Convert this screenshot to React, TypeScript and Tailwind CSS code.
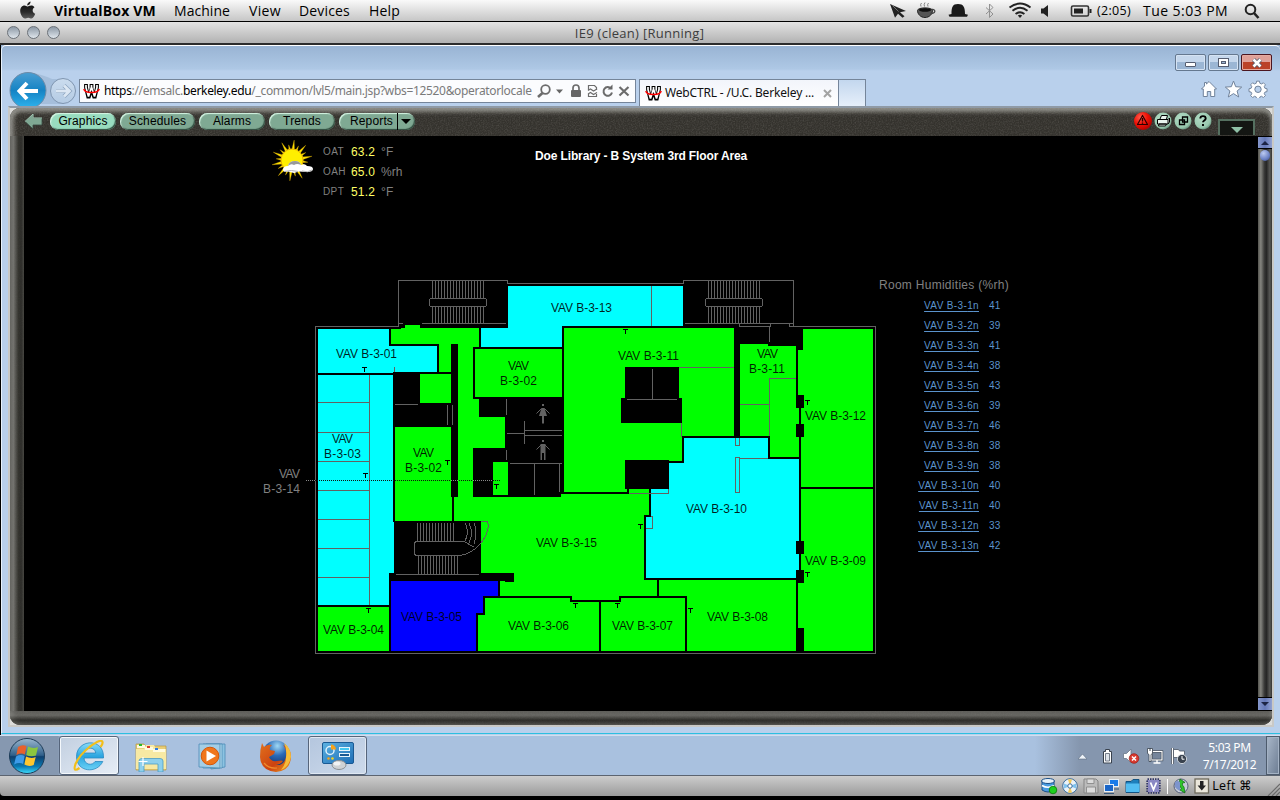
import React from "react";

const GREEN = "#00ff00";
const CYAN = "#00ffff";
const LINE = "#626262";

/* ---------- macOS menu bar ---------- */

function AppleLogo() {
  return (
    <svg width="17" height="19" viewBox="0 0 17 19">
      <defs>
        <linearGradient id="apple" x1="0" y1="0" x2="0" y2="1">
          <stop offset="0" stopColor="#151515" />
          <stop offset=".5" stopColor="#2a2a2a" />
          <stop offset="1" stopColor="#5a5a5a" />
        </linearGradient>
      </defs>
      <path d="M11.6 0.6c.2 1.8-1.4 3.9-3.4 3.9C8 2.700 9.600.9 11.600.6Z" fill="#222" />
      <path
        d="M8.300 5.600c.9 0 2-1.100 3.900-1.100 1.400 0 2.600.7 3.300 1.700-2.700 1.700-2.300 5.500.7 6.600-.6 1.700-2.100 4.600-3.700 4.700-1.300 0-1.700-.8-3.300-.8s-2.100.8-3.300.8C3.800 17.400 1.200 13.400 1.200 10c0-3.200 2-5.400 4.300-5.400 1.300 0 2.100 1 2.800 1Z"
        fill="url(#apple)"
      />
    </svg>
  );
}

function StatusIcons() {
  return (
    <svg width="206" height="21" viewBox="888 0 206 21" fill="#222">
      <path d="M890 4l16 7-6 1.200 4.500 4-2 1.600-4.500-4-3 4z" />
      <path d="M892.500 5.500l6 6" stroke="#bbb" strokeWidth=".5" />
      <path d="M917.500 10.500c0-3.500 15-3.500 15 0 0 3.500-3 7-7.500 7s-7.500-3.500-7.500-7z" fill="#555" stroke="#222" />
      <ellipse cx="925" cy="10" rx="6" ry="1.700" fill="#111" />
      <path d="M932 9.500c4-.5 4 4-1.500 4" fill="none" stroke="#444" strokeWidth="1.300" />
      <path d="M921 6.500q-1-2 .5-3.500m3 3.500q-1-2 .5-4m3 4q-1-2 .5-3.500" fill="none" stroke="#777" strokeWidth=".9" />
      <path d="M951.500 14c0-7 1-10 6.500-10s7 3 7 10l3 .8-1 1.900h-17.500l-1-1.900z" fill="#1a1a1a" />
      <path d="M986 7.500l7 6.500-3.500 3.500V4l3.500 3.500-7 6.500" fill="none" stroke="#909090" strokeWidth="1" />
      <g fill="none" stroke="#222" strokeWidth="1.900">
        <path d="M1009.500 7.500q10.500-8 21 0" />
        <path d="M1012.500 10.800q7.500-6 15 0" />
        <path d="M1015.600 14q4.400-3.600 8.800 0" />
      </g>
      <path d="M1017.800 15.500q2.200-1.500 4.400 0l-2.200 2.500z" />
      <path d="M1041 8.500h2.500l4.500-3.500v12l-4.500-3.500H1041z" />
      <rect x="1071.500" y="6" width="17" height="10" rx="1.500" fill="none" stroke="#333" strokeWidth="1.600" />
      <rect x="1074" y="8.500" width="9" height="5" fill="#222" />
      <path d="M1089.500 9h2v4h-2z" />
    </svg>
  );
}

function MenuBar() {
  return (
    <header className="flex h-[22px] items-center border-b border-black bg-linear-to-b from-[#fafafa] to-[#c6c6c6] pl-[19px] font-['Open_Sans',sans-serif] text-[14px] leading-[20px] text-black">
      <AppleLogo />
      <span className="ml-[18px] w-[120px] text-[14px] font-bold tracking-[0.15px]">VirtualBox VM</span>
      <span className="w-[75px] tracking-[0.05px]">Machine</span>
      <span className="w-[50px] tracking-[0.3px]">View</span>
      <span className="w-[70px] tracking-[0.15px]">Devices</span>
      <span className="w-[40px] tracking-[0.2px]">Help</span>
      <div className="ml-auto flex items-center pr-[19px]">
        <StatusIcons />
        <span className="ml-[3px] w-[46px] text-[12.500px] tracking-[0.3px]">(2:05)</span>
        <span className="w-[101px] whitespace-nowrap text-[14px] tracking-[0.45px]">Tue 5:03 PM</span>
        <svg width="17" height="18" viewBox="0 0 17 18" fill="none" stroke="#222">
          <circle cx="6.500" cy="7.500" r="4.800" strokeWidth="2" />
          <path d="M10 11l4.500 5" strokeWidth="2.600" />
        </svg>
      </div>
    </header>
  );
}

function TitleBar() {
  return (
    <div className="flex h-[23px] items-center border-b-2 border-[#2c2c2c] bg-linear-to-b from-[#e4e4e4] to-[#b2b2b2] pl-[7px]">
      <div className="flex w-[120px] gap-[7px]">
        {[0, 1, 2].map((i) => (
          <span key={i} className="h-[13px] w-[13px] rounded-full border border-[#6b7178] bg-linear-to-b from-[#8d99a6] to-[#dfe6ec]" />
        ))}
      </div>
      <span className="flex-1 pr-[128px] text-center font-['Open_Sans',sans-serif] text-[13px] leading-[20px] tracking-[0.28px] text-[#3d3d3d]">
        IE9 (clean) [Running]
      </span>
    </div>
  );
}

/* ---------- Browser chrome ---------- */

function WebCtrlIcon() {
  return (
    <svg width="17" height="16" viewBox="0 0 17 16" fill="none">
      <path d="M3 1v3.500L5.500 15L8.500 5.500L11.500 15L14 4.500V1M8.500 1v6" stroke="#000" strokeWidth="3.800" strokeLinejoin="bevel" />
      <path d="M3 2v2.500L5.500 13.500L8.500 4L11.500 13.500L14 4.500V2M8.500 2v4" stroke="#fff" strokeWidth="1.700" strokeLinejoin="bevel" />
      <path d="M.8 6Q1.500 9.500 8.500 9.500T16.200 6" stroke="#f00" strokeWidth="1.400" />
    </svg>
  );
}

function WindowButtons() {
  return (
    <div className="flex h-[33px] justify-end gap-[2px] pr-[8px] pt-[8px]">
      <span className="flex h-[17px] w-[31px] items-end justify-center rounded-[2px] border border-[#65788f] bg-linear-to-b from-[#c5d7ec] from-50% to-[#9bb6d4] to-50% pb-[3px] shadow-[inset_0_0_0_1px_#d5e3f3]">
        <i className="h-[5px] w-[11px] rounded-[1px] border border-[#555d70] bg-white" />
      </span>
      <span className="flex h-[17px] w-[31px] items-center justify-center rounded-[2px] border border-[#65788f] bg-linear-to-b from-[#c5d7ec] from-50% to-[#9bb6d4] to-50% shadow-[inset_0_0_0_1px_#d5e3f3]">
        <svg width="11" height="9" viewBox="0 0 11 9">
          <rect x=".5" y=".5" width="10" height="8" fill="#fff" stroke="#555d70" />
          <rect x="3.500" y="3.500" width="4" height="2" fill="#9bb6d4" stroke="#555d70" />
        </svg>
      </span>
      <span className="flex h-[17px] w-[31px] items-center justify-center rounded-[2px] border border-[#4b1620] bg-linear-to-b from-[#dfa098] from-50% to-[#bb4229] to-50% shadow-[inset_0_0_0_1px_#e5aaa0]">
        <svg width="12" height="10" viewBox="0 0 12 10">
          <path d="M2.500 1.500l7 7M9.500 1.500l-7 7" stroke="#555d70" strokeWidth="4.200" />
          <path d="M2.500 1.500l7 7M9.500 1.500l-7 7" stroke="#fff" strokeWidth="2.600" />
        </svg>
      </span>
    </div>
  );
}

function NavButtons() {
  return (
    <svg width="71" height="35" viewBox="7 70 71 35" className="shrink-0 self-start">
      <defs>
        <linearGradient id="back" x1="0" y1="0" x2="0" y2="1">
          <stop offset="0" stopColor="#4a9ed2" />
          <stop offset=".5" stopColor="#1583c4" />
          <stop offset="1" stopColor="#2fb4ee" />
        </linearGradient>
        <linearGradient id="fwd" x1="0" y1="0" x2="0" y2="1">
          <stop offset="0" stopColor="#cbdcee" />
          <stop offset="1" stopColor="#b4cbe4" />
        </linearGradient>
      </defs>
      <path d="M34 72q12 3 18 6q8 0 12 0V103H40z" fill="#9cb6d4" opacity=".7" />
      <circle cx="28" cy="89.500" r="18" fill="url(#back)" stroke="#6d8ba8" />
      <path d="M27 82l-7.500 8 7.500 8M20 90H38" fill="none" stroke="#fff" strokeWidth="4" />
      <circle cx="63" cy="90" r="12.500" fill="url(#fwd)" stroke="#7f95b0" />
      <path d="M64 84.500l5.500 5.500-5.500 5.500M56 90h13" fill="none" stroke="#8ba3bf" strokeWidth="4.200" />
      <path d="M64 84.500l5.500 5.500-5.500 5.500M56 90h13" fill="none" stroke="#dce7f3" strokeWidth="2.800" />
    </svg>
  );
}

function AddressIcons() {
  return (
    <svg width="94" height="16" viewBox="537 82 94 16" fill="none" stroke="#6c6c6c">
      <circle cx="545.500" cy="88.500" r="4.300" strokeWidth="1.800" />
      <path d="M542.500 92l-4.500 4" strokeWidth="2.600" />
      <path d="M556 88.500h7l-3.500 4z" fill="#666" stroke="none" />
      <rect x="571" y="89" width="10" height="7" rx="1" fill="#666" stroke="none" />
      <path d="M573 89v-2a3 3 0 0 1 6 0v2" strokeWidth="1.700" />
      <path d="M588.500 89V84.500h6l2 2V89M588.500 93v2.500h8V93" strokeWidth="1.200" />
      <path d="M588 89.500l2.500-1.500 3 2 3.500-2M588 93l2.500-1.500 3 2 3.500-2" strokeWidth="1.200" />
      <path d="M611 87.500a4.300 4.300 0 1 0 1 4" strokeWidth="2" />
      <path d="M607.500 88.500h5v-5z" fill="#666" stroke="none" />
      <path d="M619.500 86l9 8.500M628.500 86l-9 8.500" strokeWidth="2.200" />
    </svg>
  );
}

function ToolIcons() {
  return (
    <svg width="67" height="18" viewBox="1201 80 67 18" fill="#fff" stroke="#71839b" strokeWidth="1">
      <path d="M1209 81.500l7.500 7.500h-1.800v7.500h-4v-5h-3.400v5h-4V89h-1.800l3-3v-3.500h2v1.500z" />
      <path d="M1233.500 81l2.200 5.700 6 .4-4.600 3.900 1.600 6-5.200-3.400-5.200 3.400 1.600-6-4.600-3.900 6-.4z" />
      <g>
        <path d="M1256.500 81.500h3l.4 2.200 1.800.7 1.900-1.200 2.100 2.100-1.200 1.900.7 1.700 2.200.5v3l-2.200.5-.7 1.700 1.200 1.900-2.100 2.100-1.900-1.300-1.800.7-.4 2h-3l-.4-2-1.800-.7-1.900 1.300-2.100-2.100 1.200-1.900-.7-1.700-2.200-.5v-3l2.200-.5.7-1.700-1.200-1.900 2.100-2.100 1.900 1.200 1.800-.7z" transform="translate(51.600 3) scale(.959)" />
        <circle cx="1258" cy="89.300" r="3.200" fill="#b9d0ec" />
      </g>
    </svg>
  );
}

function NavRow() {
  return (
    <div className="flex h-[27px] items-start pl-[5px]">
      <div className="-mt-[8px] flex">
        <NavButtons />
      </div>
      <div className="ml-px flex h-[24px] w-[557px] shrink-0 items-center border border-[#75859a] bg-[#fbfcfe] pl-[3px]">
        <WebCtrlIcon />
        <span className="ml-[4px] w-[429px] whitespace-nowrap font-['Noto_Sans',sans-serif] text-[12px] leading-[20px] tracking-[-0.33px] text-[#7a7a7a]">
          <span className="text-black">https</span>://emsalc.<span className="text-black">berkeley.edu</span>
          /_common/lvl5/main.jsp?wbs=12520&amp;operatorlocale
        </span>
        <span className="ml-[4px]">
          <AddressIcons />
        </span>
      </div>
      <div className="ml-[3px] flex h-[27px] w-[200px] shrink-0 items-center border border-b-0 border-[#75859a] bg-linear-to-b from-[#f2f5fb] to-white pl-[5px]">
        <WebCtrlIcon />
        <span className="ml-[3px] w-[158px] whitespace-nowrap font-['Noto_Sans',sans-serif] text-[12px] leading-[20px] tracking-[-0.17px] text-[#111]">
          WebCTRL - /U.C. Berkeley ...
        </span>
        <svg width="9" height="9" viewBox="0 0 9 9">
          <path d="M1 1l7 7M8 1L1 8" stroke="#a3a3a3" strokeWidth="2" />
        </svg>
      </div>
      <div className="h-[27px] w-[27px] border border-b-0 border-l-0 border-[#75859a] bg-linear-to-b from-[#c3d7ee] to-[#e6effa]" />
      <div className="ml-auto pr-[12px] pt-px">
        <ToolIcons />
      </div>
    </div>
  );
}

/* ---------- WebCTRL frame ---------- */

const TABS = [
  { label: "Graphics", box: "w-[66px]", on: true },
  { label: "Schedules", box: "w-[75px]", on: false },
  { label: "Alarms", box: "w-[66px]", on: false },
  { label: "Trends", box: "w-[66px]", on: false },
];

const PILL =
  "flex h-[17px] items-center justify-center rounded-full font-['Liberation_Sans',sans-serif] text-[12px] leading-[17px] tracking-[0.15px] text-black shadow-[inset_1px_1px_1px_#d6f5e4,inset_-1px_-1px_1px_#2f4a3d]";

function RoundIcons() {
  return (
    <svg width="80" height="20" viewBox="1133 111 80 20">
      <defs>
        <radialGradient id="gball" cx=".4" cy=".35" r=".75">
          <stop offset="0" stopColor="#b4dcc6" />
          <stop offset=".7" stopColor="#98c8ae" />
          <stop offset="1" stopColor="#4f7a66" />
        </radialGradient>
        <radialGradient id="rball" cx=".35" cy=".3" r=".8">
          <stop offset="0" stopColor="#ff5a4c" />
          <stop offset=".5" stopColor="#ee1106" />
          <stop offset="1" stopColor="#a80000" />
        </radialGradient>
      </defs>
      <circle cx="1143" cy="121" r="9" fill="url(#rball)" />
      <path d="M1142.500 115.500l5 9h-10z" fill="none" stroke="#2a0000" strokeWidth="1.200" strokeLinejoin="round" />
      <path d="M1142.500 118v3.500M1142.500 122.500v1.200" stroke="#2a0000" strokeWidth="1.400" />
      <circle cx="1163" cy="121" r="8.500" fill="url(#gball)" />
      <path d="M1160 119l1.500-3.500h6l-1 3.500M1157.500 119.500h10.500v4.500h-10.500zM1159 124h7.500l-1 2h-7zM1168 119.500l1.500-1.500v4l-1.500 2" fill="#e8f4ee" stroke="#000" />
      <circle cx="1183" cy="121" r="8.500" fill="url(#gball)" />
      <path d="M1182.500 117h5v5h-5zM1179.500 120h5v4.500h-5z" fill="#9ccdb3" stroke="#000" strokeWidth="1.300" />
      <circle cx="1203" cy="121" r="8.500" fill="url(#gball)" />
      <path d="M1200.300 118.500c0-3.200 5.400-3.200 5.400 0 0 2-2.700 1.900-2.700 3.700M1203 124v2" fill="none" stroke="#000" strokeWidth="1.900" />
    </svg>
  );
}

function FrameToolbar() {
  return (
    <div className="relative flex h-[28px] items-start pl-[14px] pt-[5px]">
      <svg width="19" height="17" viewBox="0 0 19 17" className="mr-[7px]">
        <path d="M1 8.500L9 1v4h9v7H9v4z" fill="#7fa893" stroke="#39473f" strokeWidth=".8" />
        <path d="M1 8.500L9 1v4h9" fill="none" stroke="#a4c6b4" />
      </svg>
      <div className="flex gap-[4px]">
        {TABS.map((t) => (
          <span key={t.label} className={`${PILL} ${t.box} ${t.on ? "bg-[#98dcbf]" : "bg-[#7fa993]"}`}>
            {t.label}
          </span>
        ))}
        <span className={`${PILL} w-[76px] bg-[#7fa993]`}>
          <span className="flex-1 pl-[7px] text-center">Reports</span>
          <span className="flex h-full w-[18px] items-center border-l border-black pl-[3px]">
            <i className="h-0 w-0 border-x-[5px] border-t-[5px] border-x-transparent border-t-black" />
          </span>
        </span>
      </div>
      <div className="ml-auto -mt-[2px] flex">
        <RoundIcons />
        <span className="ml-[5px] mr-[17px] mt-[8px] flex h-[16px] w-[37px] items-end justify-center border-2 border-b-0 border-[#557060] bg-[#141613] pb-[2px]">
          <i className="h-0 w-0 border-x-[6px] border-t-[6px] border-x-transparent border-t-[#8fc0a6]" />
        </span>
      </div>
    </div>
  );
}

function Grain() {
  return (
    <svg className="absolute inset-0 opacity-20" width="100%" height="100%">
      <filter id="grain">
        <feTurbulence type="fractalNoise" baseFrequency=".75" numOctaves="2" seed="4" />
        <feColorMatrix values="0 0 0 0 .45  0 0 0 0 .43  0 0 0 0 .4  1.800 0 0 0 -.65" />
      </filter>
      <rect width="100%" height="100%" filter="url(#grain)" />
    </svg>
  );
}

function ScrollColumn() {
  return (
    <div className="flex w-[14px] flex-col items-center bg-[linear-gradient(90deg,#55554f,#85857f_20%,#3a3a38_45%,#262625_60%,#5a5a57_85%,#333)]">
      <span className="flex h-[13px] w-full items-center justify-center border-y border-black bg-linear-to-r from-[#8698cc] via-[#6679b8] to-[#93a3d2]">
        <i className="h-0 w-0 border-x-[4px] border-b-[4px] border-x-transparent border-b-[#1c2444]" />
      </span>
      <span className="mt-px h-[11px] w-[10px] rounded-full bg-[radial-gradient(circle_at_35%_30%,#bccaf0,#6a80c4_60%,#34427a)]" />
      <span className="mt-auto flex h-[14px] w-full items-center justify-center border-y border-black bg-linear-to-r from-[#8698cc] via-[#6679b8] to-[#93a3d2]">
        <i className="h-0 w-0 border-x-[4px] border-t-[4px] border-x-transparent border-t-[#1c2444]" />
      </span>
    </div>
  );
}

/* ---------- Page content ---------- */

function SunIcon() {
  const rays = Array.from({ length: 20 }, (_, i) => i * 18);
  return (
    <svg width="42" height="42" viewBox="0 0 42 42">
      {rays.map((a, i) => (
        <path key={a} d={i % 2 ? "M18.800 11L20 4.500l1.200 6.500z" : "M18.500 11L20 0l1.500 11z"} fill="#ffe200" stroke="#d8a800" strokeWidth=".3" transform={`rotate(${a + 6} 20 20.500)`} />
      ))}
      <circle cx="20" cy="20" r="11" fill="#ffef00" stroke="#e8b000" />
      <path d="M11 30q0-4 5-4 1-5 7-5 5 0 6 4 4-2 6 1 6 0 6 3 0 3-6 3l-8-.5-5 1.500-6-1.500q-5 1-5-1.500z" fill="#fff" />
      <path d="M16 26q1-5 7-5 5 0 6 4-4-2-7 0-3-2-6 1z" fill="#999" />
      <path d="M12 31.500q8-2 14 0M30 31q6 2 10-1" stroke="#b5b5b5" fill="none" />
    </svg>
  );
}

function Weather() {
  const rows = [
    ["OAT", "63.2", "°F"],
    ["OAH", "65.0", "%rh"],
    ["DPT", "51.2", "°F"],
  ];
  return (
    <div className="flex w-[139px]">
      <div className="pt-[4px]">
        <SunIcon />
      </div>
      <div className="ml-[9px] pt-[6px]">
        {rows.map(([k, v, u]) => (
          <div key={k} className="flex h-[20px] items-center text-[12px] leading-[20px] text-[#808080]">
            <span className="w-[28px] text-[10px] tracking-[0.4px]">{k}</span>
            <span className="w-[30px] text-[12px] tracking-[0.2px] text-[#ffff66]">{v}</span>
            <span className="tracking-[0.1px]">{u}</span>
          </div>
        ))}
      </div>
    </div>
  );
}

const ROOMS: { fill: string; points: string }[] = [
  { fill: CYAN, points: "318,329 389,329 389,346 437,346 437,372 393,372 393,373 318,373" },
  { fill: CYAN, points: "318,375 393,375 393,522 394,522 394,573 389,573 389,605 318,605" },
  { fill: CYAN, points: "508,286 683,286 683,326 562,326 562,347 481,347 481,328 508,328" },
  {
    fill: GREEN,
    points:
      "391,329 401,329 401,328 405,328 405,325 420,325 420,328 479,328 479,347 473,347 473,399 479,399 479,417 505,417 505,448 473,448 473,498 458,498 458,344 451,344 451,372 439,372 439,344 391,344",
  },
  { fill: GREEN, points: "420,374 451,374 451,403 420,403" },
  { fill: GREEN, points: "395,427 451,427 451,497 452,497 452,521 395,521" },
  { fill: GREEN, points: "475,349 562,349 562,397 475,397" },
  { fill: GREEN, points: "493,462 508,462 508,495 493,495" },
  { fill: GREEN, points: "564,328 734,328 734,436 682,436 682,461 627,461 627,492 564,492" },
  {
    fill: GREEN,
    points:
      "454,497 561,497 561,494 629,494 629,489 649,489 649,515 644,515 644,580 657,580 657,596 619,596 619,600 572,600 572,596 500,596 500,581 505,581 505,582 514,582 514,573 481,573 481,521 454,521",
  },
  { fill: "#0000ff", points: "391,581 498,581 498,596 483,596 483,613 476,613 476,651 391,651" },
  { fill: GREEN, points: "318,607 389,607 389,651 318,651" },
  { fill: GREEN, points: "485,598 570,598 570,602 599,602 599,651 478,651 478,615 485,615" },
  { fill: GREEN, points: "601,602 621,602 621,598 685,598 685,651 601,651" },
  { fill: GREEN, points: "659,580 796,580 796,651 687,651 687,596 659,596" },
  { fill: CYAN, points: "684,438 768,438 768,459 799,459 799,578 646,578 646,517 651,517 651,489 669,489 669,463 684,463" },
  { fill: GREEN, points: "740,344 768,344 768,346 796,346 796,395 799,395 799,457 770,457 770,436 740,436" },
  { fill: GREEN, points: "803,329 873,329 873,487 801,487 801,395 798,395 798,350 803,350" },
  { fill: GREEN, points: "801,489 873,489 873,651 804,651 804,628 798,628 798,583 801,583" },
];

const BLOCKS = [
  [625, 367, 54, 32],
  [621, 398, 61, 25],
  [625, 460, 44, 29],
  [796, 395, 8, 13],
  [796, 424, 8, 13],
  [796, 541, 8, 13],
  [796, 570, 8, 13],
];

const LABELS: [number, number, number, string][] = [
  [551, 312, 61, "VAV B-3-13"],
  [336, 358, 61, "VAV B-3-01"],
  [332, 443, 21, "VAV"],
  [324, 458, 37, "B-3-03"],
  [413, 457, 21, "VAV"],
  [405, 472, 37, "B-3-02"],
  [508, 370, 21, "VAV"],
  [500, 385, 37, "B-3-02"],
  [618, 360, 61, "VAV B-3-11"],
  [757, 358, 21, "VAV"],
  [749, 373, 36, "B-3-11"],
  [805, 420, 61, "VAV B-3-12"],
  [686, 513, 61, "VAV B-3-10"],
  [536, 547, 61, "VAV B-3-15"],
  [805, 565, 61, "VAV B-3-09"],
  [707, 621, 61, "VAV B-3-08"],
  [612, 630, 61, "VAV B-3-07"],
  [508, 630, 61, "VAV B-3-06"],
  [401, 621, 61, "VAV B-3-05"],
  [323, 634, 61, "VAV B-3-04"],
];

const SENSORS = [
  [362, 367], [445, 460], [363, 473], [494, 484], [366, 608], [573, 603],
  [623, 329], [805, 400], [638, 524], [615, 603], [688, 608], [805, 572],
];

const treads = (from: number, n: number, top: number, bottom: number) =>
  Array.from({ length: n }, (_, i) => `M${from + i * 3}.5 ${top}V${bottom}`).join("");

function FloorPlan() {
  return (
    <svg width="616" height="377" viewBox="262 279 616 377" className="shrink-0 font-['Liberation_Sans',sans-serif]">
      <g shapeRendering="crispEdges">
        {ROOMS.map((r) => (
          <polygon key={r.points} points={r.points} fill={r.fill} />
        ))}
        {BLOCKS.map(([x, y, w, h]) => (
          <rect key={`${x}-${y}`} x={x} y={y} width={w} height={h} fill="#000" />
        ))}
        <g fill="none" stroke={LINE}>
          <path d="M315.500 653.500V326.500H398.500V280.500H507.500V283.500H683.500V280.500H793.500V326.500H875.500V653.500z" />
          <path d="M398 323.500h5M422 323.500h84M685 323.500h108M739.500 323v3.500h31v-3M769.500 326v16M789.500 324v2.500h4" />
          <path d={treads(432, 18, 281, 298) + treads(432, 18, 307, 323)} />
          <path d={treads(708, 18, 281, 298) + treads(708, 18, 307, 323)} />
          <path d="M430 298.500h56M430 306.500h56M429.500 299v7M486.500 299v7M706 298.500h56M706 306.500h56M705.500 299v7M762.500 299v7" />
          <path d="M394.500 367v5M369.500 375v230M318 402.500h51M318 432.500h51M318 461.500h51M318 490.500h51M318 519.500h51M318 548.500h51M318 577.500h51" />
          <path d="M395 404.500h23M447.500 405v20M452.500 405v20M651.500 286v40" />
          <path d="M506.500 399v16M507 433.500h17M524.500 421v23M524 430.500h38M524 435.500h38M506.500 450v10M510 463.500h52M534.500 464v31M559.500 464v28" />
          <path d="M679 367.500h55M652.500 369v30M627 399.500h50M681.500 423v14M629 493.500h39.500V489" />
          <path d="M735.500 438v7.500h4V438M735.500 457.500h4v35h-4zM740 458.500h28M646 516.500h6.500v12H646" />
          <path d="M769.500 436V378.500H796M740 404.500h29" />
          <path d={treads(417, 13, 523, 541) + treads(418, 14, 556, 574)} />
          <path d="M463 541.500H416L414.500 543V554L416 555.500H460C475 553 487 540 488.500 525L487 521.500H481M396 574.500h83" />
          <path d="M465 523q5 9 0 18M469 523q5 10 0 20M474 523q4 10 0 21M463 541l11 6" />
        </g>
        <path d="M315 480.500h186" stroke="#111" strokeDasharray="1 1" />
        <path d="M306 480.500h9M451 480.500h7M473 480.500h20" stroke="#8a8a8a" strokeDasharray="1 1" />
        <path d="M644 515h7v2h-5v63h-2z" fill="#000" />
        <path d={SENSORS.map(([x, y]) => `M${x} ${y}.5h5M${x + 2}.5 ${y}v5`).join("")} stroke="#000" />
      </g>
      <g stroke={LINE} fill={LINE}>
        <rect x="542" y="404" width="2" height="2" stroke="none" />
        <path d="M541.500 408h3l2.500 8h-3v7.500h-2V416h-3z" stroke="none" />
        <path d="M541.500 408.500l-5 5M544.500 408.500l5 5" />
        <rect x="542" y="440" width="2" height="2" stroke="none" />
        <path d="M540.500 444h5v16h-1.500v-7h-2v7h-1.500z" stroke="none" />
        <path d="M541.500 444.500l-5 5M544.500 444.500l5 5" />
      </g>
      <g fontSize="12" fill="#000" fillOpacity=".88">
        {LABELS.map(([x, y, w, s]) => (
          <text key={`${x}-${y}`} x={x} y={y} textLength={w}>
            {s}
          </text>
        ))}
      </g>
      <g fontSize="12" fill="#808080">
        <text x="279" y="478" textLength="21">VAV</text>
        <text x="263" y="493" textLength="37">B-3-14</text>
      </g>
    </svg>
  );
}

const HUMIDITY = [41, 39, 41, 38, 43, 39, 46, 38, 38, 40, 40, 33, 42];

function HumidityList() {
  return (
    <section className="pl-px">
      <h2 className="h-[17px] whitespace-nowrap text-[12px] leading-[12px] tracking-[0.28px] text-[#808080]">Room Humidities (%rh)</h2>
      <ul className="w-[123px]">
        {HUMIDITY.map((v, i) => (
          <li key={i} className="flex h-[20px] items-center justify-end text-[10px] leading-[20px] text-[#5b93cc]">
            <a className="whitespace-nowrap tracking-[0.36px] underline underline-offset-2">VAV B-3-{i + 1}n</a>
            <span className="ml-[10px] w-[13px] tracking-[0.3px]">{v}</span>
          </li>
        ))}
      </ul>
    </section>
  );
}

function ContentPane() {
  return (
    <main className="flex flex-1 flex-col bg-black pl-[238px] font-['Liberation_Sans',sans-serif]">
      <div className="flex h-[143px] pl-[10px]">
        <Weather />
        <h1 className="ml-[124px] mt-[13px] whitespace-nowrap text-[12px] font-bold leading-[14px] tracking-[-0.13px] text-white">
          Doe Library - B System 3rd Floor Area
        </h1>
      </div>
      <div className="flex">
        <FloorPlan />
        <HumidityList />
      </div>
    </main>
  );
}

function Browser() {
  return (
    <div className="flex h-[690px] flex-col border-l border-l-black bg-[#b9d0ec] bg-[linear-gradient(#98b3d3,#aec8e5_24px,#b9d0ec_26px,#b9d0ec)]">
      <div className="flex h-[689px] flex-col rounded-t-[5px] border-b border-l border-t border-b-[#2cbfe0] border-l-[#e8f2fc] border-t-white">
        <WindowButtons />
        <NavRow />
        <div className="ml-[6px] mr-[6px] flex h-[621px] flex-col border-2 border-[#c9c9c6] border-t-[#8f9aa6] bg-[#dcdcda]">
          <div className="relative flex flex-1 flex-col overflow-hidden rounded-[10px] bg-[#34322d] shadow-[inset_0_4px_4px_#8b8b85,inset_4px_0_4px_#85857f,inset_-2px_0_3px_#5c5c59,inset_0_-4px_4px_#222]">
            <Grain />
            <FrameToolbar />
            <div className="relative flex flex-1">
              <div className="w-[14px] bg-[linear-gradient(90deg,#5c5c58,#757571_25%,#34342f_60%,#2a2a27_80%,#4a4a45)] opacity-80" />
              <ContentPane />
              <ScrollColumn />
            </div>
            <div className="relative h-[14px] bg-[linear-gradient(#6a6a66,#777773_30%,#2e2e2a_65%,#50504b)] opacity-75" />
          </div>
        </div>
      </div>
    </div>
  );
}

/* ---------- Windows taskbar ---------- */

function StartOrb() {
  return (
    <svg width="38" height="38" viewBox="0 0 38 38">
      <defs>
        <linearGradient id="orb" x1="0" y1="0" x2="0" y2="1">
          <stop offset="0" stopColor="#9cb8cf" />
          <stop offset=".48" stopColor="#2f5f8a" />
          <stop offset=".52" stopColor="#0e3f6e" />
          <stop offset=".8" stopColor="#0a7ab4" />
          <stop offset="1" stopColor="#3fe0ff" />
        </linearGradient>
      </defs>
      <circle cx="19" cy="19" r="17.500" fill="url(#orb)" stroke="#1d3b57" />
      <path d="M10 10q4-3 8.500-1l-1.600 8.500q-4-2-8.500.500z" fill="#e8612c" />
      <path d="M20 9.500q5 2.500 10 .5l-2 8.500q-5 1.800-9.700-.5z" fill="#8cc63f" />
      <path d="M8 19.500q4.500-2.500 8.700-.5l-1.600 8q-4-2-9 .5z" fill="#3d9be9" />
      <path d="M18 19.500q5 2.500 9.700.500l-2 8q-5 2-9.300-.5z" fill="#fdc62f" />
    </svg>
  );
}

function IeIcon() {
  return (
    <svg width="32" height="32" viewBox="73 738 32 32">
      <defs>
        <linearGradient id="ie" x1="0" y1="0" x2="0" y2="1">
          <stop offset="0" stopColor="#8adcf8" />
          <stop offset=".5" stopColor="#2ba5e0" />
          <stop offset="1" stopColor="#6cd2f6" />
        </linearGradient>
      </defs>
      <path d="M103.500 756H84c.3 7 8.500 8 11 3.500h7.800C97 772 76.500 770.500 76.500 754.500 76.500 737 104.500 735 103.500 756zM84.300 751h11.400c-.5-6.500-10.700-6.500-11.400 0z" fill="url(#ie)" stroke="#1b7fbc" strokeWidth=".7" />
      <path d="M79.500 766q-7 5-4-4 4-9 14-17 12-9 13-5 .5 2-2 5" fill="none" stroke="#f3bf1a" strokeWidth="2.200" />
    </svg>
  );
}

function ExplorerIcon() {
  return (
    <svg width="34" height="32" viewBox="134 739 34 32">
      <path d="M136 743h8l1 2h21v24h-30z" fill="#e8ce78" stroke="#b99a3c" strokeWidth=".7" />
      <path d="M136 748h8l2-4h8l2 4h10v20h-30z" fill="#f7e9a3" />
      <path d="M137 744h8v3h-8zM145 746h8v3h-8zM153 748h12v3h-12z" fill="#fffbe0" />
      <path d="M139 743h3v2h-3z" fill="#28b828" />
      <path d="M147 745h3v2h-3z" fill="#d83c2c" />
      <path d="M155 747h3v2h-3z" fill="#2f7de0" />
      <path d="M139 771v-11q0-2.500 3-2.500h18q3 0 3 2.500v11h-5v-8h-14v8z" fill="#8ed0ec" stroke="#4d9cc4" strokeWidth=".8" />
      <path d="M143 756v9M138.500 760.500h9" stroke="#fff" strokeWidth="1.200" />
    </svg>
  );
}

function PlayerIcon() {
  return (
    <svg width="30" height="28" viewBox="198 742 30 28">
      <path d="M206 744h19v23l-14 2z" fill="#8cc3e2" stroke="#4b8cb5" strokeWidth=".8" />
      <path d="M203 744h19v24h-19z" fill="#b7dff2" stroke="#4b8cb5" strokeWidth=".8" />
      <path d="M199 744h21v24l-21-1z" fill="#a4cee6" stroke="#4b8cb5" strokeWidth=".8" />
      <circle cx="210" cy="756" r="8.800" fill="#f0761c" stroke="#d4570c" />
      <path d="M206.500 750.500v11l9.500-5.500z" fill="#fff" />
    </svg>
  );
}

function FirefoxIcon() {
  return (
    <svg width="34" height="32" viewBox="258 739 34 32">
      <defs>
        <radialGradient id="globe" cx=".55" cy=".2" r=".8">
          <stop offset="0" stopColor="#9fd8f5" />
          <stop offset=".45" stopColor="#2a6ab8" />
          <stop offset="1" stopColor="#102a66" />
        </radialGradient>
        <linearGradient id="fox" x1="0" y1="0" x2="1" y2="1">
          <stop offset="0" stopColor="#e2711c" />
          <stop offset=".6" stopColor="#cc4210" />
          <stop offset="1" stopColor="#f0a322" />
        </linearGradient>
      </defs>
      <circle cx="276" cy="753" r="13.500" fill="url(#globe)" />
      <path d="M262 742l2 4q4-3 8-2-3 2-2 5l5 1-1 3-5 3q2 5 8 4 5-1 6 0-3 4-7 4 8 1 10-8 1-8-3-12 8 3 8 11 0 15-15 16-15-1-16-15 0-8 2-14z" fill="url(#fox)" />
      <path d="M284 742q7 5 7 14-2 10-10 13 5-6 5-13 1-8-2-14z" fill="#f5bd3a" />
      <path d="M264 762q5 6 13 5" fill="none" stroke="#f08a2c" strokeWidth="1.200" />
    </svg>
  );
}

function ControlPanelIcon() {
  return (
    <svg width="34" height="30" viewBox="320 742 34 30">
      <defs>
        <linearGradient id="cp" x1="0" y1="0" x2="1" y2="1">
          <stop offset="0" stopColor="#5db2e2" />
          <stop offset="1" stopColor="#1d6db5" />
        </linearGradient>
      </defs>
      <rect x="321.500" y="743.500" width="31" height="21" rx="1.500" fill="url(#cp)" stroke="#1a5a94" />
      <circle cx="329" cy="751.500" r="4" fill="none" stroke="#dff1fb" strokeWidth="1.500" />
      <path d="M330 750.500v-5a5 5 0 0 1 5 5z" fill="#f5a21b" />
      <rect x="338.500" y="748.500" width="10" height="3" fill="#45c7f0" stroke="#e7f5fc" />
      <rect x="338.500" y="754.500" width="10" height="3" fill="#1a5a94" stroke="#e7f5fc" />
      <circle cx="327.500" cy="759.500" r="1.300" fill="#f5a21b" />
      <circle cx="331.500" cy="759.500" r="1.300" fill="#f5d21b" />
      <ellipse cx="338" cy="766" rx="7" ry="4.500" fill="#cfd2d5" stroke="#8c9094" />
      <ellipse cx="336" cy="764.500" rx="3.500" ry="2" fill="#f2f3f4" />
    </svg>
  );
}

function TrayIcons() {
  return (
    <svg width="114" height="20" viewBox="1076 746 114 20">
      <path d="M1078 759h9l-4.500-5z" fill="#eef3f8" stroke="#5b6b80" strokeWidth=".6" />
      <path d="M1105.500 749.500h4v2h2v11.500h-8v-11.500h2z" fill="#fff" stroke="#39424e" />
      <path d="M1105.500 753.500h4v7.500h-4z" fill="#dfe5ec" stroke="#56606e" strokeWidth=".8" />
      <path d="M1123.500 753.500h3l4.500-4.500v14l-4.500-4.500h-3z" fill="#fff" stroke="#6a7788" strokeWidth=".8" />
      <circle cx="1134" cy="758.500" r="4.800" fill="#d83a30" stroke="#9b1c16" strokeWidth=".7" />
      <path d="M1132 756.500l4 4M1136 756.500l-4 4" stroke="#fff" strokeWidth="1.500" />
      <rect x="1151.500" y="751.500" width="10.500" height="8.500" fill="#75859b" stroke="#38424f" strokeWidth="2.400" />
      <rect x="1151.500" y="751.500" width="10.500" height="8.500" fill="none" stroke="#fff" strokeWidth="1.200" />
      <path d="M1153.500 763h7M1157 760v3" stroke="#fff" strokeWidth="1.400" fill="none" />
      <path d="M1147.500 748.500h5v5l-1.500 1v7h-2v-7l-1.500-1z" fill="#fff" stroke="#38424f" strokeWidth=".8" />
      <path d="M1150 748v3" stroke="#38424f" />
      <path d="M1172.500 748v16" stroke="#38424f" strokeWidth="2.800" />
      <path d="M1172.500 748v16" stroke="#fff" strokeWidth="1.400" />
      <path d="M1173.500 749.500h5l1 1.500h5v8h-5l-1-1.500h-5z" fill="#fff" stroke="#4a5665" strokeWidth=".8" />
      <circle cx="1182" cy="759" r="4.600" fill="#39424e" stroke="#e6ebf0" strokeWidth=".8" />
      <path d="M1182 756v3.200h2.500" stroke="#fff" fill="none" />
    </svg>
  );
}

function Taskbar() {
  return (
    <nav className="flex h-[41px] items-stretch border-b border-t border-b-[#5c6470] border-t-[#d2dfee] bg-[linear-gradient(90deg,#8698b0_0,#8698b0_58px,#a9c1df_62px,#a9c1df_1035px,#8596ae_1080px)]">
      <div className="flex w-[59px] items-center pl-[8px]">
        <StartOrb />
      </div>
      <div className="flex w-[60px] items-center justify-center rounded-[3px] border border-[#56657b] bg-linear-to-br from-[#c2cfe0] to-[#e6edf6] shadow-[inset_0_0_0_1px_#f4f8fc]">
        <IeIcon />
      </div>
      <div className="flex w-[189px] items-center pl-[15px]">
        <ExplorerIcon />
        <span className="ml-[30px]">
          <PlayerIcon />
        </span>
        <span className="ml-[30px]">
          <FirefoxIcon />
        </span>
      </div>
      <div className="flex w-[59px] items-center justify-center rounded-[3px] border border-[#56657b] bg-linear-to-br from-[#b4c6de] to-[#cddaeb] shadow-[inset_0_0_0_1px_#dfe8f3]">
        <ControlPanelIcon />
      </div>
      <div className="ml-auto flex items-center">
        <TrayIcons />
        <div className="w-[76px] pl-[3px] text-center font-['Noto_Sans',sans-serif] text-[12px] leading-[17px] tracking-[-0.4px] text-white">
          <div>5:03 PM</div>
          <div>7/17/2012</div>
        </div>
        <div className="h-full w-[14px] border border-[#4d5b6d] bg-linear-to-br from-[#a9b7c9] to-[#6c7c92] shadow-[inset_0_0_0_1px_#a4b2c4]" />
      </div>
    </nav>
  );
}

function HostIcons() {
  return (
    <svg width="170" height="18" viewBox="1040 777 170 18">
      <path d="M1042 781v9q6 4 12 0v-9z" fill="#4a9be0" stroke="#1a4f88" />
      <ellipse cx="1048" cy="781" rx="6.500" ry="2.500" fill="#e8f2fa" stroke="#1a4f88" />
      <path d="M1042 785.500q6 3.500 12 0" stroke="#fff" strokeWidth="1.500" fill="none" />
      <circle cx="1053" cy="790" r="3.800" fill="#1fd01f" stroke="#087808" strokeWidth=".8" />
      <circle cx="1070" cy="786" r="7.300" fill="#eaf2f8" stroke="#3c6e9c" />
      <path d="M1070 786l-2-6.500a7 7 0 0 1 4 0zM1070 786l2 6.500a7 7 0 0 1-4 0z" fill="#f3ca5a" />
      <path d="M1070 786l-6-2.500v5zM1070 786l6-2.500v5z" fill="#7fc3ef" />
      <circle cx="1070" cy="786" r="2.200" fill="#fff" stroke="#3c6e9c" />
      <path d="M1084 779h12l2 2v12h-14z" fill="#bcbcbc" stroke="#858585" />
      <path d="M1087 779h7v4.500h-7zM1086.500 787h9v6h-9z" fill="#dcdcdc" stroke="#8f8f8f" />
      <rect x="1109.500" y="779.500" width="9" height="7" fill="#1a7be8" stroke="#e6eef5" />
      <path d="M1112 789h7" stroke="#35567a" />
      <rect x="1104.500" y="784.500" width="9" height="7" fill="#1a66c8" stroke="#e6eef5" />
      <path d="M1104 793.500h10" stroke="#35567a" />
      <path d="M1126 781.500h5l2-2h6v13h-13z" fill="#1d7fbc" stroke="#125282" />
      <path d="M1126 783.500h13.500v8.500H1126z" fill="#52bdf2" />
      <rect x="1147.500" y="779.500" width="12" height="13" fill="none" stroke="#333769" strokeDasharray="1.500 1" strokeWidth="2.400" />
      <rect x="1148" y="780" width="11" height="12" fill="#8a88c4" />
      <path d="M1150.500 782.500l3 7 3-7" fill="none" stroke="#fff" strokeWidth="1.800" />
      <path d="M1167.500 779v15" stroke="#fff" />
      <ellipse cx="1181" cy="786" rx="7" ry="7" fill="#c5cbd6" stroke="#56607a" />
      <path d="M1180 779l5 3.500-2.500.5q-1 2 1.500 4l1 6-5-3 1.500-1q-3-4-2-8z" fill="#2fc52a" stroke="#0f6b10" strokeWidth=".7" />
      <path d="M1175 782q3-2 5 0v9q-4-2-5-4z" fill="#7d94cc" />
      <rect x="1195" y="779" width="13.500" height="14" fill="#eae6da" stroke="#6e6a5c" strokeWidth="1.300" />
      <path d="M1200 781h3.500v4.500h2.500l-4.200 5-4.200-5h2.400z" fill="#222" />
    </svg>
  );
}

function HostStatusBar() {
  return (
    <footer className="flex h-[20px] items-center justify-end rounded-bl-[4px] bg-linear-to-b from-[#cdcdcd] to-[#9b9b9b]">
      <HostIcons />
      <span className="ml-[2px] whitespace-nowrap font-['Open_Sans','DejaVu_Sans',sans-serif] text-[12.500px] leading-[18px] tracking-[0.3px] text-black">Left ⌘</span>
      <svg width="14" height="14" viewBox="0 0 14 14" className="ml-[14px] self-end">
        <path d="M2 14L14 2M6 14l8-8M10 14l4-4" stroke="#6a6a6a" strokeWidth="1.200" />
      </svg>
    </footer>
  );
}

export default function App() {
  return (
    <div className="flex h-[800px] w-[1280px] flex-col overflow-hidden bg-black">
      <MenuBar />
      <TitleBar />
      <Browser />
      <Taskbar />
      <HostStatusBar />
    </div>
  );
}
